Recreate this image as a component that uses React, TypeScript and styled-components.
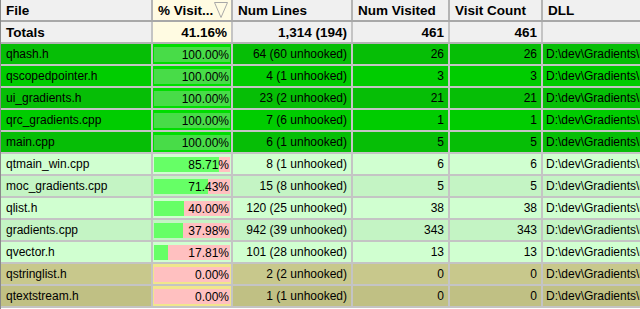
import styled, { createGlobalStyle } from 'styled-components';

const GlobalStyle = createGlobalStyle`
  body {
    margin: 0;
    background: #ffffff;
    font-family: 'Liberation Sans', Arial, sans-serif;
    overflow: hidden;
  }
`;

const COLUMNS = '152px 80px 120px 97px 93px 120px';

type Tier = 'full' | 'partial' | 'none';

const rowColors: Record<Tier, [string, string]> = {
  full: ['#06be06', '#00cc00'],
  partial: ['#c4f4c4', '#d0ffd0'],
  none: ['#c0c084', '#c8c88c'],
};

const pctBg: Record<Tier, string> = {
  full: '#00dd00',
  partial: 'transparent',
  none: '#f0e68c',
};

const fillColor: Record<Tier, string> = {
  full: '#48dc48',
  partial: '#66ff66',
  none: '#66ff66',
};

const Table = styled.div`
  width: 640px;
  height: 309px;
  overflow: hidden;
  border-left: 1px solid #8a8a8a;
  box-sizing: border-box;
  font-size: 12px;
  color: #000;
`;

const GridRow = styled.div<{ $bg: string; $line?: string }>`
  display: grid;
  grid-template-columns: ${COLUMNS};
  height: 22px;
  box-sizing: border-box;
  background: ${({ $bg }) => $bg};
  border-bottom: 2px solid ${({ $line }) => $line || '#c4c4c4'};
`;

const HeaderCell = styled.div<{ $sorted?: boolean }>`
  display: flex;
  align-items: center;
  justify-content: space-between;
  padding: 0 3px 0 5px;
  font-weight: bold;
  font-size: 13.5px;
  white-space: nowrap;
  overflow: hidden;
  background: ${({ $sorted }) => ($sorted ? '#fffbe2' : 'transparent')};
  border-right: 2px solid #b4b4b4;
`;

const SortArrow = () => (
  <svg width="14" height="16" viewBox="0 0 14 16">
    <polygon points="0.5,0.5 13.5,0.5 7,15.5" fill="none" stroke="#a8a8a8" strokeWidth="1" />
  </svg>
);

const Cell = styled.div<{ $right?: boolean; $bold?: boolean; $bg?: string }>`
  display: flex;
  align-items: center;
  justify-content: ${({ $right }) => ($right ? 'flex-end' : 'flex-start')};
  padding: ${({ $right }) => ($right ? '0 4px 0 2px' : '0 2px 0 5px')};
  font-weight: ${({ $bold }) => ($bold ? 'bold' : 'normal')};
  font-size: ${({ $bold }) => ($bold ? '13.5px' : '12px')};
  white-space: nowrap;
  overflow: hidden;
  background: ${({ $bg }) => $bg || 'transparent'};
  border-right: 2px solid #c4c4c4;
`;

const PctCell = styled.div<{ $bg: string }>`
  display: flex;
  padding: 3px 1px 2px 1px;
  background: ${({ $bg }) => $bg};
  border-right: 2px solid #c4c4c4;
  overflow: hidden;
`;

const Track = styled.div`
  position: relative;
  flex: 1;
  background: #ffc0c0;
  display: flex;
  align-items: center;
  justify-content: flex-end;
  padding-right: 1px;
`;

const Fill = styled.div<{ $color: string }>`
  position: absolute;
  left: 0;
  top: 0;
  bottom: 0;
  background: ${({ $color }) => $color};
`;

const PctText = styled.span`
  position: relative;
  font-size: 12px;
`;

const DllCell = styled.div`
  display: flex;
  align-items: center;
  padding-left: 3px;
  white-space: nowrap;
  overflow: hidden;
`;

const files = [
  { name: 'qhash.h', pct: 100, lines: '64 (60 unhooked)', visited: 26, count: 26 },
  { name: 'qscopedpointer.h', pct: 100, lines: '4 (1 unhooked)', visited: 3, count: 3 },
  { name: 'ui_gradients.h', pct: 100, lines: '23 (2 unhooked)', visited: 21, count: 21 },
  { name: 'qrc_gradients.cpp', pct: 100, lines: '7 (6 unhooked)', visited: 1, count: 1 },
  { name: 'main.cpp', pct: 100, lines: '6 (1 unhooked)', visited: 5, count: 5 },
  { name: 'qtmain_win.cpp', pct: 85.71, lines: '8 (1 unhooked)', visited: 6, count: 6 },
  { name: 'moc_gradients.cpp', pct: 71.43, lines: '15 (8 unhooked)', visited: 5, count: 5 },
  { name: 'qlist.h', pct: 40.0, lines: '120 (25 unhooked)', visited: 38, count: 38 },
  { name: 'gradients.cpp', pct: 37.98, lines: '942 (39 unhooked)', visited: 343, count: 343 },
  { name: 'qvector.h', pct: 17.81, lines: '101 (28 unhooked)', visited: 13, count: 13 },
  { name: 'qstringlist.h', pct: 0, lines: '2 (2 unhooked)', visited: 0, count: 0 },
  { name: 'qtextstream.h', pct: 0, lines: '1 (1 unhooked)', visited: 0, count: 0 },
];

const tierOf = (pct: number): Tier => (pct >= 100 ? 'full' : pct > 0 ? 'partial' : 'none');

const App = () => {
  return (
    <>
      <GlobalStyle />
      <Table>
        <GridRow $bg="#f0f0f0" $line="#a8a8a8">
          <HeaderCell>File</HeaderCell>
          <HeaderCell $sorted>
            % Visit...
            <SortArrow />
          </HeaderCell>
          <HeaderCell>Num Lines</HeaderCell>
          <HeaderCell>Num Visited</HeaderCell>
          <HeaderCell>Visit Count</HeaderCell>
          <HeaderCell>DLL</HeaderCell>
        </GridRow>
        <GridRow $bg="#f0f0f0" $line="#b4b4b4">
          <Cell $bold>Totals</Cell>
          <Cell $bold $right $bg="#fffbe2">41.16%</Cell>
          <Cell $bold $right>1,314 (194)</Cell>
          <Cell $bold $right>461</Cell>
          <Cell $bold $right>461</Cell>
          <Cell />
        </GridRow>
        {files.map((f, i) => {
          const tier = tierOf(f.pct);
          // qstringlist sits on the lighter khaki, qtextstream on the darker one
          const bg = tier === 'none' ? rowColors.none[i === 10 ? 1 : 0] : rowColors[tier][i % 2];
          return (
            <GridRow key={f.name} $bg={bg}>
              <Cell>{f.name}</Cell>
              <PctCell $bg={tier === 'partial' ? bg : pctBg[tier]}>
                <Track>
                  <Fill $color={fillColor[tier]} style={{ width: `${f.pct}%` }} />
                  <PctText>{f.pct.toFixed(2)}%</PctText>
                </Track>
              </PctCell>
              <Cell $right>{f.lines}</Cell>
              <Cell $right>{f.visited}</Cell>
              <Cell $right>{f.count}</Cell>
              <DllCell>D:\dev\Gradients\debug\Gradients.exe</DllCell>
            </GridRow>
          );
        })}
      </Table>
    </>
  );
};

export default App;
